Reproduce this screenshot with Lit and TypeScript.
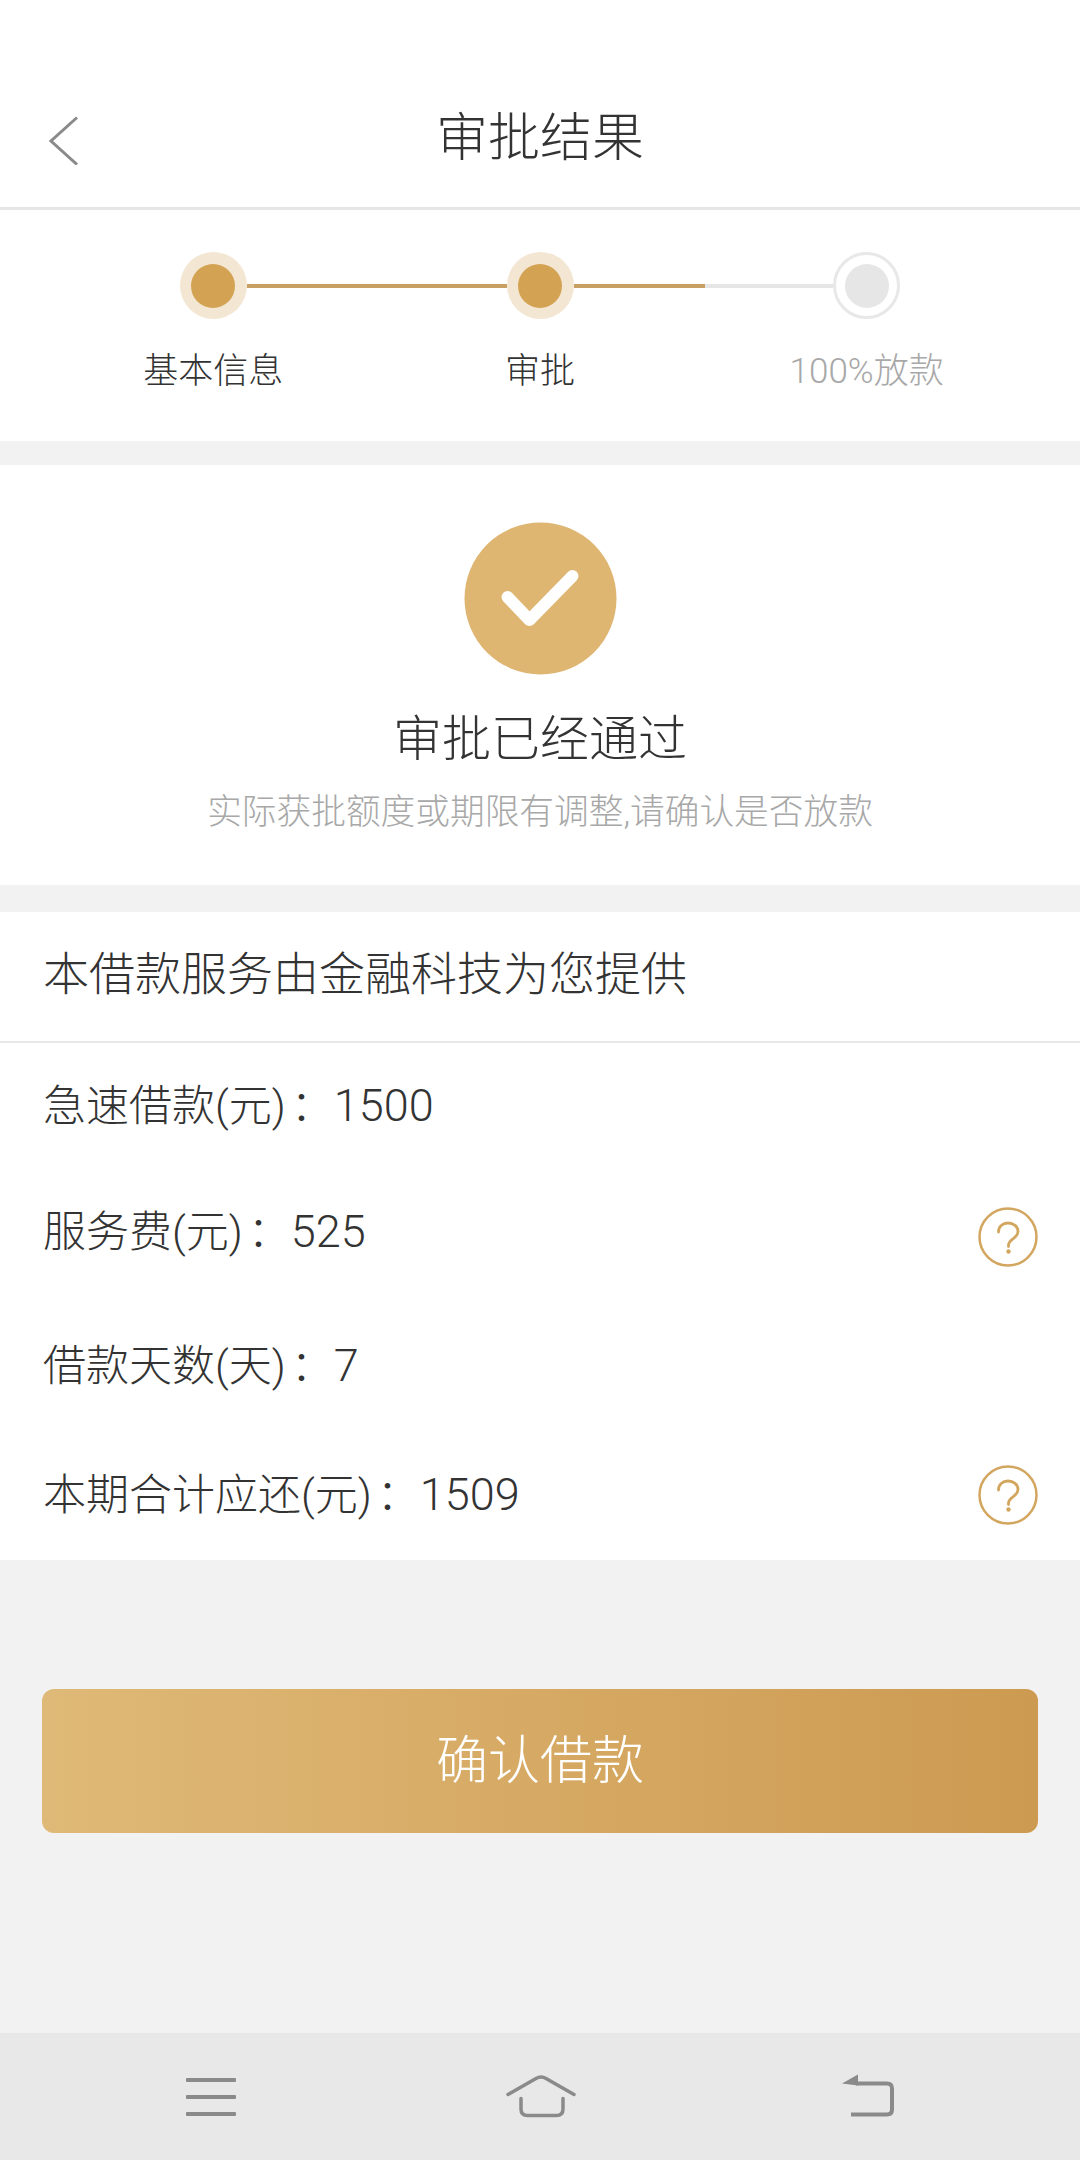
import { LitElement, html, css } from "lit";
import { customElement } from "lit/decorators.js";

const steps = [
  { label: "基本信息", done: true, left: "none", right: "on" },
  { label: "审批", done: true, left: "on", right: "on" },
  { label: "100%放款", done: false, left: "off", right: "none" },
];

const rows = [
  { label: "急速借款(元)", value: "1500", help: false },
  { label: "服务费(元)", value: "525", help: true },
  { label: "借款天数(天)", value: "7", help: false },
  { label: "本期合计应还(元)", value: "1509", help: true },
];

@customElement("app-root")
export class AppRoot extends LitElement {
  static styles = css`
    :host {
      display: flex;
      flex-direction: column;
      width: 1080px;
      min-height: 2160px;
      background: #f2f2f2;
      color: #333;
      font-family: Roboto, "Noto Sans CJK SC", sans-serif;
      font-weight: 300;
    }
    .header {
      display: grid;
      grid-template-columns: 1fr auto 1fr;
      align-items: center;
      height: 137px;
      padding-top: 70px;
      background: #fff;
      border-bottom: 3px solid #e6e6e6;
    }
    .back {
      display: block;
      margin-left: 48px;
    }
    .header h1 {
      margin: 0;
      font-size: 52px;
      font-weight: 300;
      line-height: 70px;
    }
    .stepper {
      display: grid;
      grid-template-columns: repeat(3, 1fr);
      padding: 42px 50px 52px;
      background: #fff;
    }
    .step {
      display: flex;
      flex-direction: column;
      align-items: stretch;
    }
    .track {
      display: flex;
      align-items: center;
    }
    .line {
      flex: 1;
      height: 4px;
      margin-top: 1px;
    }
    .line.on {
      position: relative;
      background: #c9a063;
    }
    .step:nth-child(2) .line:first-child {
      margin-left: -2px;
    }
    .step:nth-child(2) .line:last-child {
      margin-right: -2px;
    }
    .line.off {
      background: #e6e6e6;
    }
    .dot {
      display: flex;
      align-items: center;
      justify-content: center;
      box-sizing: border-box;
      width: 67px;
      height: 67px;
      border-radius: 50%;
      background: #f3e6d2;
    }
    .dot i {
      width: 44px;
      height: 44px;
      border-radius: 50%;
      background: #d3a253;
    }
    .dot.todo {
      background: #fff;
      border: 3px solid #e8e8e8;
    }
    .dot.todo i {
      background: #e6e6e6;
    }
    .step span {
      margin-top: 33px;
      margin-bottom: -3px;
      font-size: 35px;
      line-height: 40px;
      text-align: center;
    }
    .step.todo span {
      color: #a8a8a8;
    }
    .result {
      display: flex;
      flex-direction: column;
      align-items: center;
      margin-top: 24px;
      padding: 57px 0 51px;
      background: #fff;
    }
    .result svg {
      display: block;
    }
    .result h2 {
      margin: 35px 0 0;
      font-size: 49px;
      font-weight: 300;
      line-height: 60px;
    }
    .result p {
      margin: 20px 0 0;
      color: #a8a8a8;
      font-size: 34.7px;
      line-height: 44px;
    }
    .detail {
      margin-top: 27px;
      background: #fff;
    }
    .detail-title {
      height: 129px;
      padding-left: 43px;
      border-bottom: 2px solid #e8e8e8;
      font-size: 46px;
      line-height: 125px;
    }
    .row {
      display: flex;
      align-items: center;
      justify-content: space-between;
      box-sizing: border-box;
      padding: 0 42px 0 43px;
      font-size: 43px;
    }
    .row:nth-child(2) {
      height: 118px;
    }
    .row:nth-child(3) {
      height: 134px;
    }
    .row:nth-child(4) {
      height: 134px;
    }
    .row:nth-child(5) {
      height: 131px;
      padding-bottom: 7px;
    }
    .colon {
      margin-left: 5px;
    }
    .value {
      font-size: 45px;
    }
    .help {
      display: block;
      margin-top: 8px;
    }
    .row:nth-child(3) .help {
      margin-top: 18px;
    }
    .confirm {
      display: block;
      box-sizing: border-box;
      width: 996px;
      height: 144px;
      margin: 129px 42px 0;
      padding: 0 0 9px;
      border: 0;
      border-radius: 12px;
      background: linear-gradient(90deg, #dfb977, #cd9a51);
      color: #fff;
      font: inherit;
      font-size: 52px;
    }
    .nav {
      display: grid;
      grid-template-columns: repeat(3, 1fr);
      align-items: center;
      justify-items: center;
      height: 127px;
      margin-top: auto;
      padding: 0 48px;
      background: #e8e8e8;
    }
    .nav svg {
      display: block;
    }
  `;

  private helpIcon() {
    return html`<svg class="help" width="60" height="60" viewBox="0 0 60 60" fill="none">
      <circle cx="30" cy="30" r="28.5" stroke="#d3a65f" stroke-width="2.5" />
      <path d="M20.500 25c0-5.500 4-9 9.500-9s10 3.500 10 8.500c0 7-9.500 7.500-9.500 13.500v1.500" stroke="#d3a65f" stroke-width="2.800" stroke-linecap="round" />
      <circle cx="30.500" cy="44.500" r="2.200" fill="#d3a65f" />
    </svg>`;
  }

  render() {
    return html`
      <header class="header">
        <svg class="back" width="32" height="52" viewBox="0 0 32 52" fill="none">
          <path d="M29 4.500 3 28l26 23.500" stroke="#8a8a8a" stroke-width="3" />
        </svg>
        <h1>审批结果</h1>
      </header>

      <section class="stepper">
        ${steps.map(
          (s) => html`
            <div class="step ${s.done ? "" : "todo"}">
              <div class="track">
                <div class="line ${s.left}"></div>
                <div class="dot ${s.done ? "" : "todo"}"><i></i></div>
                <div class="line ${s.right}"></div>
              </div>
              <span>${s.label}</span>
            </div>
          `
        )}
      </section>

      <section class="result">
        <svg width="153" height="153" viewBox="0 0 153 153" fill="none">
          <circle cx="76.500" cy="76.500" r="76" fill="#deb672" />
          <path d="M43.500 75l22 23 43-44" stroke="#fff" stroke-width="12" stroke-linecap="round" stroke-linejoin="round" />
        </svg>
        <h2>审批已经通过</h2>
        <p>实际获批额度或期限有调整,请确认是否放款</p>
      </section>

      <section class="detail">
        <div class="detail-title">本借款服务由金融科技为您提供</div>
        ${rows.map(
          (r) => html`
            <div class="row">
              <span>${r.label}<span class="colon">：</span><span class="value">${r.value}</span></span>
              ${r.help ? this.helpIcon() : ""}
            </div>
          `
        )}
      </section>

      <button class="confirm">确认借款</button>

      <nav class="nav">
        <svg width="52" height="38" viewBox="0 0 52 38" fill="#8a8a8a">
          <rect x="0" y="0" width="50" height="4" rx="1" />
          <rect x="0" y="17" width="50" height="4" rx="1" />
          <rect x="0" y="34" width="50" height="4" rx="1" />
        </svg>
        <svg width="72" height="46" viewBox="0 0 72 46" fill="none" stroke="#8a8a8a" stroke-width="3.500">
          <path d="M4 20.500 32 4.500q5-3 10 0L70 20.500" stroke-linecap="round" />
          <path d="M17 24.500V35q0 6.500 6.500 6.500h29q6.500 0 6.500-6.500V24.500" stroke-linecap="round" />
        </svg>
        <svg width="52" height="46" viewBox="0 0 52 46" fill="none">
          <path d="M0 9.500 16 .5v11z" fill="#8a8a8a" />
          <path d="M14 9.500h31q5 0 5 5v21q0 5-5 5H9" stroke="#8a8a8a" stroke-width="4" />
        </svg>
      </nav>
    `;
  }
}
